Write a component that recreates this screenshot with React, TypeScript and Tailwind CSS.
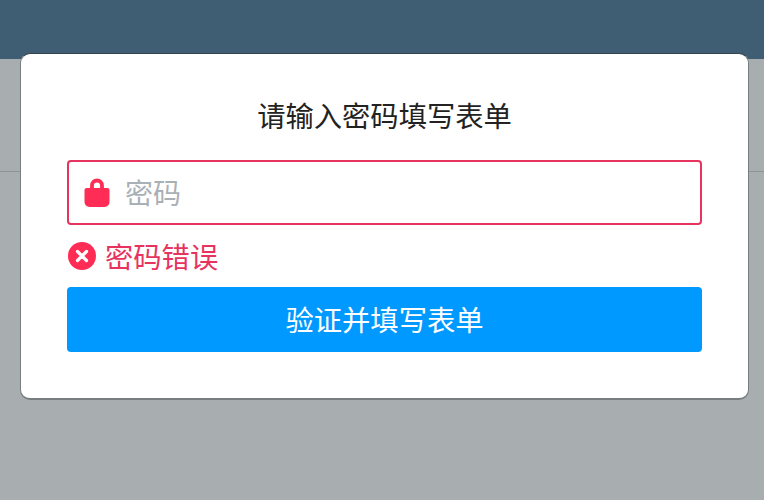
import React from "react";

const cjk = "font-['Noto_Sans_CJK_SC','Noto_Sans',sans-serif]";

export default function App() {
  return (
    <div className={`relative w-[764px] h-[500px] overflow-hidden bg-[#a8adaf] ${cjk}`}>
      {/* page behind the overlay */}
      <div className="h-[59px] bg-[#405e73]" />
      <div className="h-[113px] border-b border-[#8f9496]" />

      {/* dialog */}
      <div className="absolute left-[20px] top-[53px] w-[729px] h-[347px] bg-white rounded-[10px] border-b-2 border-l border-r border-t border-[#787d7f] border-t-[#33444f] px-[46px] pt-[43px]">
        <h1 className="text-[28.3px] leading-[36px] text-center text-[#222222] font-normal">请输入密码填写表单</h1>

        {/* password field */}
        <div className="mt-[27px] h-[65px] flex items-center border-2 border-[#e6345f] rounded-[4px] pl-[15px]">
          <svg width="26" height="29" viewBox="0 0 26 29" className="shrink-0">
            <path d="M8 12V7.5a5 5 0 0 1 10 0V12" fill="none" stroke="#ff2d55" strokeWidth="3.8" />
            <path d="M2.5 10h21a2 2 0 0 1 2 2v12a5 5 0 0 1-5 5H5.5a5 5 0 0 1-5-5V12a2 2 0 0 1 2-2z" fill="#ff2d55" />
          </svg>
          <input
            className="ml-[15px] flex-1 min-w-0 bg-transparent outline-none text-[28px] leading-[36px] mb-[2px] placeholder:text-[#a9b0b6]"
            placeholder="密码"
            type="password"
          />
        </div>

        {/* error */}
        <div className="mt-[14px] h-[34px] flex items-center gap-[9px] pl-[1px]">
          <svg width="28" height="28" viewBox="0 0 28 28" className="shrink-0">
            <circle cx="14" cy="14" r="14" fill="#ff2d55" />
            <path d="M9.5 9.5l9 9M18.5 9.5l-9 9" stroke="#fff" strokeWidth="3.2" strokeLinecap="round" />
          </svg>
          <span className="text-[28.3px] leading-[34px] text-[#e6345f] mb-[1px]">密码错误</span>
        </div>

        {/* submit */}
        <button className="mt-[14px] w-full h-[65px] rounded-[4px] bg-[#0099ff] text-white text-[28.3px] leading-[36px]">
          <span className="relative bottom-[1px]">验证并填写表单</span>
        </button>
      </div>
    </div>
  );
}
